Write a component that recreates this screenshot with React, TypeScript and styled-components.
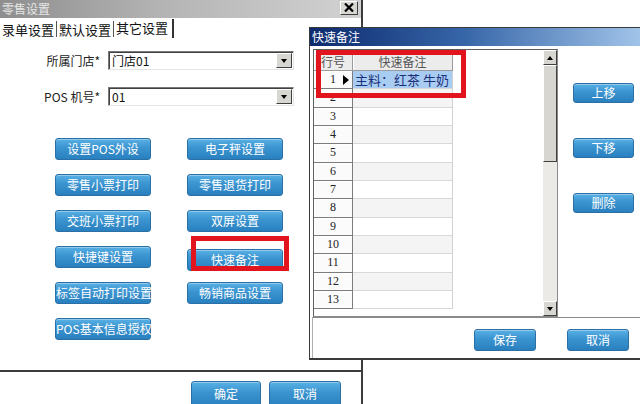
import React from "react";
import styled, { createGlobalStyle } from "styled-components";

const GlobalStyle = createGlobalStyle`
  html, body {
    margin: 0;
    padding: 0;
    background: #fff;
  }
  body {
    width: 640px;
    height: 404px;
    overflow: hidden;
    font-family: "Noto Sans CJK SC", "Liberation Sans", sans-serif;
  }
  * {
    box-sizing: border-box;
  }
`;

const fieldRows = [
    { label: "所属门店*", value: "门店01" },
    { label: "POS 机号*", value: "01" },
];

const settingButtons = [
    "设置POS外设",
    "电子秤设置",
    "零售小票打印",
    "零售退货打印",
    "交班小票打印",
    "双屏设置",
    "快捷键设置",
    "快速备注",
    "标签自动打印设置",
    "畅销商品设置",
    "POS基本信息授权",
];

const rowNumbers = Array.from({ length: 13 }, (_, i) => i + 1);

export default function App() {
    return (
        <>
            <GlobalStyle />
            <Desktop>
                <MainWindow>
                    <TitleBar $inactive>
                        <TitleText $inactive>零售设置</TitleText>
                        <CloseButton>
                            <CloseIcon />
                        </CloseButton>
                    </TitleBar>
                    <TabStrip>
                        <Tab>录单设置</Tab>
                        <Tab>默认设置</Tab>
                        <Tab $active>其它设置</Tab>
                    </TabStrip>
                    <Panel>
                        <Form>
                            {fieldRows.map((f) => (
                                <FieldRow key={f.label}>
                                    <FieldLabel>{f.label}</FieldLabel>
                                    <SelectBox>
                                        <SelectValue>{f.value}</SelectValue>
                                        <DropButton>
                                            <ArrowDown />
                                        </DropButton>
                                    </SelectBox>
                                </FieldRow>
                            ))}
                        </Form>
                        <ButtonGrid>
                            {settingButtons.map((text) =>
                                text === "快速备注" ? (
                                    <Marked key={text}>
                                        <BlueButton $w={96} $h={22}>
                                            {text}
                                        </BlueButton>
                                        <ButtonMark />
                                    </Marked>
                                ) : (
                                    <BlueButton key={text} $w={96} $h={22}>
                                        {text}
                                    </BlueButton>
                                )
                            )}
                        </ButtonGrid>
                    </Panel>
                    <MainFooter>
                        <BlueButton $w={70} $h={26}>
                            确定
                        </BlueButton>
                        <BlueButton $w={72} $h={26}>
                            取消
                        </BlueButton>
                    </MainFooter>
                </MainWindow>

                <Dialog>
                    <TitleBar>
                        <TitleText>快速备注</TitleText>
                        <CloseButton $small>
                            <CloseIcon />
                        </CloseButton>
                    </TitleBar>
                    <DialogBody>
                        <GridBox>
                            <TableArea>
                                <Table>
                                    <HeadCell>行号</HeadCell>
                                    <HeadCell>快速备注</HeadCell>
                                    {rowNumbers.map((n) => (
                                        <React.Fragment key={n}>
                                            <RowHead>
                                                {n}
                                                {n === 1 && <RowPointer />}
                                            </RowHead>
                                            <DataCell $alt={n % 2 === 0} $selected={n === 1}>
                                                {n === 1 ? "主料：红茶 牛奶" : ""}
                                            </DataCell>
                                        </React.Fragment>
                                    ))}
                                </Table>
                                <GridMark />
                            </TableArea>
                            <ScrollBar>
                                <ScrollArrow>
                                    <ArrowUp />
                                </ScrollArrow>
                                <ScrollThumb />
                                <ScrollTrack />
                                <ScrollArrow>
                                    <ArrowDown />
                                </ScrollArrow>
                            </ScrollBar>
                        </GridBox>
                        <SidePanel>
                            <BlueButton $w={61} $h={20}>
                                上移
                            </BlueButton>
                            <BlueButton $w={61} $h={20}>
                                下移
                            </BlueButton>
                            <BlueButton $w={61} $h={20}>
                                删除
                            </BlueButton>
                        </SidePanel>
                    </DialogBody>
                    <DialogFooter>
                        <BlueButton $w={62} $h={22}>
                            保存
                        </BlueButton>
                        <BlueButton $w={62} $h={22}>
                            取消
                        </BlueButton>
                    </DialogFooter>
                </Dialog>
            </Desktop>
        </>
    );
}

const CloseIcon = () => (
    <svg width="10" height="9" viewBox="0 0 10 9">
        <path d="M1 0.5 L9 8.5 M9 0.5 L1 8.5" stroke="#000" strokeWidth="2.2" fill="none" />
    </svg>
);

const Desktop = styled.div`
    position: relative;
    width: 640px;
    height: 404px;
    overflow: hidden;
    background: #fff;
`;

const MainWindow = styled.div`
    position: absolute;
    left: 0;
    top: 0;
    width: 363px;
    height: 404px;
    display: flex;
    flex-direction: column;
    background: #fff;
    border-right: 2px solid #3c3c3c;
`;

const TitleBar = styled.div<{ $inactive?: boolean }>`
    height: 18px;
    flex: none;
    display: flex;
    align-items: center;
    justify-content: space-between;
    padding: 0 0 0 2px;
    background: ${(p) =>
        p.$inactive
            ? "linear-gradient(90deg, #8e8e8e 0%, #b4b4b4 45%, #d2d2d2 100%)"
            : "linear-gradient(90deg, #0c2a6e 0%, #3766a8 45%, #a9cbee 100%)"};
`;

const TitleText = styled.span<{ $inactive?: boolean }>`
    font-size: 12px;
    line-height: 18px;
    color: ${(p) => (p.$inactive ? "#e6e6e6" : "#fff")};
`;

const CloseButton = styled.div<{ $small?: boolean }>`
    width: ${(p) => (p.$small ? "16px" : "18px")};
    height: 14px;
    margin-right: ${(p) => (p.$small ? "-4px" : "3px")};
    margin-top: ${(p) => (p.$small ? "2px" : "-3px")};
    display: flex;
    align-items: center;
    justify-content: center;
    background: #d8d6d0;
    border: 1px solid;
    border-color: #fff #404040 #404040 #fff;
`;

const TabStrip = styled.div`
    height: 20px;
    flex: none;
    display: flex;
    align-items: center;
    padding-top: 1px;
`;

const Tab = styled.div<{ $active?: boolean }>`
    font-size: 13px;
    line-height: 17px;
    color: #111;
    padding: 0 ${(p) => (p.$active ? "4px" : "2px")} 0 2px;
    border-right: ${(p) => (p.$active ? "2px solid #333" : "1px solid #555")};
    height: ${(p) => (p.$active ? "19px" : "16px")};
`;

const Panel = styled.div`
    height: 334px;
    flex: none;
    border-bottom: 2px solid #3c3c3c;
    padding-top: 13px;
`;

const Form = styled.div`
    display: flex;
    flex-direction: column;
    gap: 17px;
`;

const FieldRow = styled.div`
    display: flex;
    align-items: center;
    gap: 8px;
    height: 19px;
`;

const FieldLabel = styled.span`
    width: 100px;
    text-align: right;
    font-size: 12px;
    color: #222;
    font-family: "Noto Sans CJK SC", "Liberation Serif", serif;
`;

const SelectBox = styled.div`
    width: 186px;
    height: 19px;
    display: flex;
    align-items: center;
    justify-content: space-between;
    background: #fff;
    border: 1px solid;
    border-color: #7a7a7a #e4e4e4 #e4e4e4 #7a7a7a;
    box-shadow: inset 1px 1px #404040;
`;

const SelectValue = styled.span`
    font-size: 12px;
    color: #111;
    padding-left: 3px;
    font-family: "Noto Sans CJK SC", "Liberation Sans", sans-serif;
`;

const DropButton = styled.div`
    width: 16px;
    height: 15px;
    margin-right: 1px;
    display: flex;
    align-items: center;
    justify-content: center;
    background: #d8d6d0;
    border: 1px solid;
    border-color: #fff #404040 #404040 #fff;
`;

const ArrowDown = styled.span`
    width: 0;
    height: 0;
    border-left: 3.5px solid transparent;
    border-right: 3.5px solid transparent;
    border-top: 4px solid #000;
`;

const ArrowUp = styled.span`
    width: 0;
    height: 0;
    border-left: 3.5px solid transparent;
    border-right: 3.5px solid transparent;
    border-bottom: 4px solid #000;
`;

const ButtonGrid = styled.div`
    margin: 32px 0 0 55px;
    display: grid;
    grid-template-columns: 96px 96px;
    grid-auto-rows: 22px;
    column-gap: 36px;
    row-gap: 14px;
`;

const BlueButton = styled.button<{ $w: number; $h: number }>`
    width: ${(p) => p.$w}px;
    height: ${(p) => p.$h}px;
    padding: 0;
    border: 1px solid #2a6fa6;
    border-radius: 3px;
    background: linear-gradient(180deg, #58b0e4 0%, #3a93cf 45%, #2a80bf 100%);
    box-shadow: inset 0 1px 0 rgba(255, 255, 255, 0.35);
    color: #fff;
    font-size: 12px;
    line-height: 1;
    white-space: nowrap;
    font-family: "Noto Sans CJK SC", "Liberation Sans", sans-serif;
    cursor: pointer;
`;

const Marked = styled.div`
    position: relative;
    width: 96px;
    height: 22px;
`;

const ButtonMark = styled.div`
    position: absolute;
    left: 4px;
    top: -10px;
    width: 98px;
    height: 35px;
    border: 5px solid #e2151f;
`;

const MainFooter = styled.div`
    display: flex;
    gap: 8px;
    padding: 9px 0 0 191px;
`;

const Dialog = styled.div`
    position: absolute;
    left: 309px;
    top: 27px;
    width: 345px;
    height: 333px;
    display: flex;
    flex-direction: column;
    background: #fff;
    border: 1px solid #3a3a3a;
    border-right: none;
    border-bottom: 2px solid #3a3a3a;
`;

const DialogBody = styled.div`
    height: 271px;
    display: flex;
    padding: 3px 0 0 3px;
`;

const GridBox = styled.div`
    width: 245px;
    height: 268px;
    display: flex;
    border: 1px solid #5e5e5e;
    border-right-color: #8a8a8a;
    border-bottom-color: #8a8a8a;
    background: #fff;
`;

const TableArea = styled.div`
    position: relative;
    flex: 1;
`;

const Table = styled.div`
    display: grid;
    grid-template-columns: 39px 100px;
    grid-template-rows: 21px repeat(13, 18.33px);
`;

const HeadCell = styled.div`
    display: flex;
    align-items: center;
    justify-content: center;
    font-size: 12px;
    color: #555;
    background: #ececec;
    border-right: 1px solid #9a9a9a;
    border-bottom: 1px solid #9a9a9a;
    box-shadow: inset 1px 1px #fff;
    margin-top: 3px;
`;

const RowHead = styled.div`
    position: relative;
    display: flex;
    align-items: center;
    justify-content: center;
    font-size: 12px;
    color: #222;
    font-family: "Liberation Serif", "DejaVu Serif", serif;
    background: #fbfbfb;
    border-right: 1px solid #7c7c7c;
    border-bottom: 1px solid #7c7c7c;
    box-shadow: inset 1px 1px #fff;
`;

const RowPointer = styled.span`
    position: absolute;
    right: 3px;
    top: 50%;
    margin-top: -5px;
    width: 0;
    height: 0;
    border-top: 5px solid transparent;
    border-bottom: 5px solid transparent;
    border-left: 6px solid #000;
`;

const DataCell = styled.div<{ $alt?: boolean; $selected?: boolean }>`
    display: flex;
    align-items: center;
    padding-left: 2px;
    font-size: 13px;
    color: #1b2f7a;
    white-space: nowrap;
    background: ${(p) => (p.$selected ? "#a9cdf2" : p.$alt ? "#f4f4f4" : "#fff")};
    border-right: 1px solid #d2d2d2;
    border-bottom: 1px solid #d8d8d8;
`;

const GridMark = styled.div`
    position: absolute;
    left: 2px;
    top: 0;
    width: 150px;
    height: 48px;
    border: 5px solid #e2151f;
`;

const ScrollBar = styled.div`
    width: 14px;
    display: flex;
    flex-direction: column;
    background: #ebeae6;
`;

const ScrollArrow = styled.div`
    height: 15px;
    flex: none;
    display: flex;
    align-items: center;
    justify-content: center;
    background: #d8d6d0;
    border: 1px solid;
    border-color: #fff #404040 #404040 #fff;
`;

const ScrollThumb = styled.div`
    height: 97px;
    flex: none;
    background: #d8d6d0;
    border: 1px solid;
    border-color: #fff #404040 #404040 #fff;
`;

const ScrollTrack = styled.div`
    flex: 1;
`;

const SidePanel = styled.div`
    display: flex;
    flex-direction: column;
    gap: 35px;
    padding: 34px 0 0 15px;
`;

const DialogFooter = styled.div`
    flex: 1;
    display: flex;
    gap: 31px;
    margin-left: 2px;
    padding: 11px 0 0 161px;
    border-top: 1px solid #8a8a8a;
    border-left: 1px solid #b0b0b0;
`;
